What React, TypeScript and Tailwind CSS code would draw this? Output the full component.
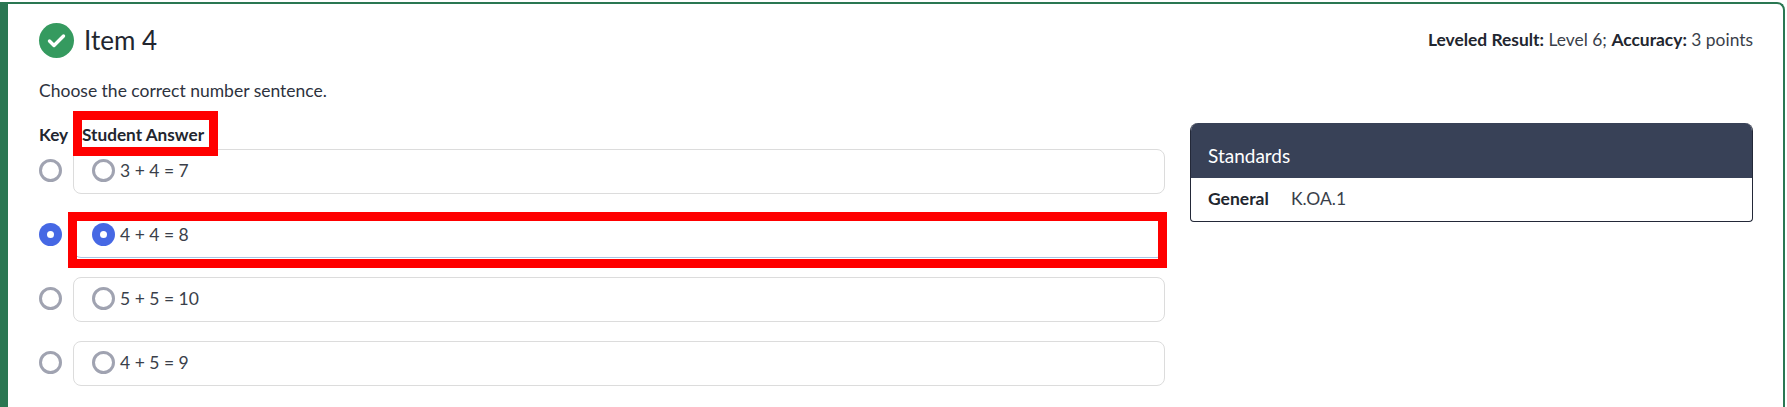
import React from 'react';

const ANSWERS = [
  { id: 'a', label: '3 + 4 = 7', correct: false },
  { id: 'b', label: '4 + 4 = 8', correct: true },
  { id: 'c', label: '5 + 5 = 10', correct: false },
  { id: 'd', label: '4 + 5 = 9', correct: false },
];

function Radio({ checked }: { checked: boolean }) {
  if (checked) {
    return (
      <span className="flex h-[23px] w-[23px] shrink-0 items-center justify-center rounded-full bg-[#4668e4]">
        <span className="h-[7px] w-[7px] rounded-full bg-white"></span>
      </span>
    );
  }
  return <span className="block h-[23px] w-[23px] shrink-0 rounded-full border-[3px] border-[#a0a3b1] bg-white"></span>;
}

export default function App() {
  return (
    <div className="h-[407px] overflow-hidden bg-white pt-[2px] font-['Lato','Open_Sans',sans-serif] text-[#22262f]">
      <div className="h-[420px] w-[1785px] rounded-tr-lg border-t-2 border-r-2 border-l-8 border-[#2a7752] pt-[19px] pr-[30px] pl-[31px]">
        <div className="flex h-[35px] items-center justify-between">
          <div className="flex items-center gap-[10px]">
            <span className="flex h-[35px] w-[35px] items-center justify-center rounded-full bg-[#359a5f]">
              <svg width="19" height="15" viewBox="0 0 19 15" fill="none">
                <path d="M2.5 8l4.5 4.5L16.5 3" stroke="white" strokeWidth="3.4" strokeLinecap="round" strokeLinejoin="round" />
              </svg>
            </span>
            <h2 className="text-[26px] leading-[35px] font-normal">Item 4</h2>
          </div>
          <div className="text-[17.4px] text-[#3a3f4a]">
            <b className="font-bold text-[#22262f]">Leveled Result:</b> Level 6; <b className="font-bold text-[#22262f]">Accuracy:</b> 3 points
          </div>
        </div>

        <p className="mt-[21px] h-[24px] text-[17.5px] leading-[24px] text-[#2d323d]">Choose the correct number sentence.</p>

        <div className="mt-[20px] flex gap-[25px]">
          <div className="w-[1126px]">
            <div className="relative flex h-[26px] items-start text-[17.2px] leading-[24px] font-bold">
              <span className="w-[43px]">Key</span>
              <span>Student Answer</span>
              <div className="absolute top-[-12px] left-[34px] z-10 h-[45px] w-[145px] border-[9px] border-[#ff0000]"></div>
            </div>
            <div className="flex flex-col gap-[19px]">
              {ANSWERS.map(answer => (
                <div key={answer.id} className="relative flex items-start gap-[11px]">
                  <span className="mt-[10px] block shrink-0"><Radio checked={answer.correct} /></span>
                  <div className={`flex h-[45px] flex-1 items-start gap-[5px] rounded-lg border-[1.5px] pt-[9px] pl-[18px] text-[17.5px] leading-[23px] text-[#3a3f4a] ${answer.correct ? 'border-[#a8c5e5]' : 'border-[#dcdcdc]'}`}>
                    <Radio checked={answer.correct} />
                    {answer.label}
                  </div>
                  {answer.correct && (
                    <div className="absolute top-[-1px] left-[29px] z-10 h-[56px] w-[1099px] border-[9px] border-[#ff0000]"></div>
                  )}
                </div>
              ))}
            </div>
          </div>

          <div className="h-[99px] w-[563px] overflow-hidden rounded-t-lg rounded-b-[4px] border-x border-b border-[#232838]">
            <div className="h-[55px] bg-[#384157] px-[17px] pt-[18px] text-[19px] leading-[29px] text-white">Standards</div>
            <div className="flex h-[43px] items-center px-[17px] text-[17.5px] text-[#3a3f4a]">
              <b className="w-[83px] font-bold text-[#22262f]">General</b>
              K.OA.1
            </div>
          </div>
        </div>
      </div>
    </div>
  );
}
